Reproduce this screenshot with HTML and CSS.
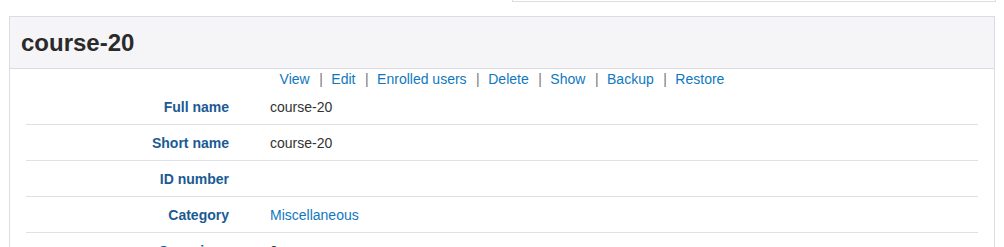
FILE: index.html
```html
<!DOCTYPE html>
<html lang="en">
<head>
<meta charset="utf-8">
<title>course-20</title>
<link rel="stylesheet" href="styles.css">
</head>
<body>
<div class="topbar"></div>
<div class="panel">
  <div class="panel-header"><h2 class="title">course-20</h2></div>
  <div class="actions">
    <a href="#">View</a><span class="sep">|</span>
    <a href="#">Edit</a><span class="sep">|</span>
    <a href="#">Enrolled users</a><span class="sep">|</span>
    <a href="#">Delete</a><span class="sep">|</span>
    <a href="#">Show</a><span class="sep">|</span>
    <a href="#">Backup</a><span class="sep">|</span>
    <a href="#">Restore</a>
  </div>
  <div class="details">
    <div class="row"><div class="label">Full name</div><div class="value">course-20</div></div>
    <div class="row"><div class="label">Short name</div><div class="value">course-20</div></div>
    <div class="row"><div class="label">ID number</div><div class="value"></div></div>
    <div class="row"><div class="label">Category</div><div class="value"><a href="#">Miscellaneous</a></div></div>
    <div class="row"><div class="label">Groupings</div><div class="value">0</div></div>
  </div>
</div>
</body>
</html>
```
FILE: styles.css
```css
html, body {
  margin: 0;
  padding: 0;
  background: #fff;
  font-family: "Liberation Sans", Arial, Helvetica, sans-serif;
  font-size: 14px;
  color: #333;
  overflow: hidden;
}
a { color: #0f78c0; text-decoration: none; }
.topbar {
  margin-left: 512px;
  width: 482px;
  height: 1px;
  border: 1px solid #dddde3;
  border-top: none;
}
.panel {
  margin: 14px 0 0 9px;
  width: 984px;
  border: 1px solid #dcdce4;
  height: 300px;
}
.panel-header {
  height: 51px;
  background: #f5f5f8;
  border-bottom: 1px solid #dcdce4;
  display: flex;
  align-items: center;
  padding-left: 11px;
}
.title {
  margin: 0;
  font-size: 24px;
  font-weight: bold;
  color: #2a2a2a;
  line-height: 28px;
}
.actions {
  height: 20px;
  line-height: 20px;
  display: flex;
  justify-content: center;
}
.sep {
  color: #777;
  margin: 0 8.5px 0 9.5px;
}
.details {
  margin: 0 16px 0 16px;
}
.row {
  display: grid;
  grid-template-columns: 203px 1fr;
  column-gap: 41px;
  height: 35px;
  align-items: center;
  border-bottom: 1px solid #e0e0e8;
}
.label {
  text-align: right;
  font-weight: bold;
  color: #1b5a94;
}
.value { color: #333; }
```
